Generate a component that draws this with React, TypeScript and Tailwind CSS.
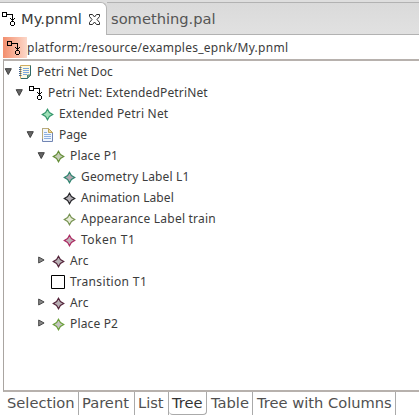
import React from "react";

type Kind = "doc" | "net" | "page" | "box" | "star";

interface Row {
  label: string;
  depth: number;
  kind: Kind;
  arrow?: "open" | "closed";
  stroke?: string;
  fill?: string;
  spacing: string;
}

const rows: Row[] = [
  { label: "Petri Net Doc", depth: 0, kind: "doc", arrow: "open", spacing: "tracking-[0.1px]" },
  { label: "Petri Net: ExtendedPetriNet", depth: 1, kind: "net", arrow: "open", spacing: "tracking-[0.15px]" },
  { label: "Extended Petri Net", depth: 2, kind: "star", stroke: "#35966c", fill: "#9fe0b8", spacing: "tracking-[0.19px]" },
  { label: "Page", depth: 2, kind: "page", arrow: "open", spacing: "tracking-[0px]" },
  { label: "Place P1", depth: 3, kind: "star", arrow: "open", stroke: "#658f38", fill: "#c5ccb6", spacing: "tracking-[0.15px]" },
  { label: "Geometry Label L1", depth: 4, kind: "star", stroke: "#2f8570", fill: "#b3a7b0", spacing: "tracking-[0.16px]" },
  { label: "Animation Label", depth: 4, kind: "star", stroke: "#252529", fill: "#b4b0b5", spacing: "tracking-[0.08px]" },
  { label: "Appearance Label train", depth: 4, kind: "star", stroke: "#779352", fill: "#e8ecd8", spacing: "tracking-[0.22px]" },
  { label: "Token T1", depth: 4, kind: "star", stroke: "#ac2a62", fill: "#c0b1b7", spacing: "tracking-[0.5px]" },
  { label: "Arc", depth: 3, kind: "star", arrow: "closed", stroke: "#54253b", fill: "#b8b0b4", spacing: "tracking-[0.2px]" },
  { label: "Transition T1", depth: 3, kind: "box", spacing: "tracking-[0.35px]" },
  { label: "Arc", depth: 3, kind: "star", arrow: "closed", stroke: "#54253b", fill: "#b8b0b4", spacing: "tracking-[0.2px]" },
  { label: "Place P2", depth: 3, kind: "star", arrow: "closed", stroke: "#6ba03a", fill: "#c4c4c1", spacing: "tracking-[0.15px]" },
];

const indents = ["pl-0", "pl-[11px]", "pl-[22px]", "pl-[33px]", "pl-[44px]"];

function NetIcon() {
  return (
    <svg width="16" height="16" viewBox="0 0 16 16" fill="#000" shapeRendering="crispEdges" className="shrink-0">
      <path d="M1 1h5v1H1zM1 5h5v1H1zM1 2h1v3H1zM5 2h1v3H5z" />
      <path d="M6 3h6v1H6zM11 4h1v6h-1zM9 7h1v1H9zM10 8h1v1h-1zM13 7h1v1h-1zM12 8h1v1h-1z" />
      <path d="M10 10h3v1h-3zM10 14h3v1h-3zM9 11h1v3H9zM13 11h1v3h-1z" />
    </svg>
  );
}

function Icon({ row }: { row: Row }) {
  if (row.kind === "net") return <NetIcon />;
  if (row.kind === "box")
    return (
      <svg width="16" height="16" viewBox="0 0 16 16" className="shrink-0">
        <path d="M1.5 1.5h13v13h-13z" fill="#fff" stroke="#000" />
      </svg>
    );
  if (row.kind === "star")
    return (
      <svg width="16" height="16" viewBox="0 0 16 16" className="shrink-0">
        <path d="M8.5 3.3L10.4 6.6l3.3 1.9-3.3 1.9-1.9 3.3-1.9-3.3L3.3 8.5l3.3-1.9z" fill={row.fill} stroke={row.stroke} strokeWidth="1.2" />
      </svg>
    );
  if (row.kind === "doc")
    return (
      <svg width="16" height="16" viewBox="0 0 16 16" className="shrink-0">
        <path d="M3.5 1.5h10v9.5l-3 3.5h-7z" fill="#fdf9e2" stroke="#d0ad60" />
        <path d="M13.5 1.5V11l-3 3.5H4" fill="none" stroke="#2f6868" />
        <path d="M10.5 14v-3h3z" fill="#8fbfa0" stroke="#4b8273" />
        <path d="M6 4.5h6M6 6.5h6M6 8.5h6M6 10.5h4" stroke="#7ca7dc" />
        <path d="M2 3.5h2.5M2 5.5h2.5M2 7.5h2.5M2 9.5h2.5M2 11.5h2.5" stroke="#47668f" />
      </svg>
    );
  return (
    <svg width="16" height="16" viewBox="0 0 16 16" className="shrink-0">
      <path d="M3.5 1.5h6l4 4v9h-10z" fill="#f1f6fd" stroke="#7185b3" />
      <path d="M3.5 12V1.5H9" fill="none" stroke="#b9ab7a" />
      <path d="M9.5 1.5v4h4z" fill="#efd99b" stroke="#bea35b" />
      <path d="M5 5.5h3M5 7.5h7M5 9.5h7M5 11.5h7" stroke="#8db0e0" />
    </svg>
  );
}

function Arrow({ state }: { state?: "open" | "closed" }) {
  return (
    <svg width="10" height="10" viewBox="0 0 10 10" className="shrink-0">
      {state === "open" && <path d="M1.2 1.7h6.1L4.25 7.5z" fill="#666" stroke="#3d3d3d" />}
      {state === "closed" && <path d="M1.7 1v6l5.4-3z" fill="#888" stroke="#484848" />}
    </svg>
  );
}

const views = [
  { name: "Selection", width: "w-[76px]", pad: "pl-[4px]" },
  { name: "Parent", width: "w-[56px]", pad: "pl-[3px]" },
  { name: "List", width: "w-[34px]", pad: "pl-[3px]" },
  { name: "Tree", width: "w-[38px]", pad: "pl-[3px]" },
  { name: "Table", width: "w-[46px]", pad: "pl-[4px]" },
  { name: "Tree with Columns", width: "w-[143px]", pad: "pl-[4px]" },
];

export default function App() {
  return (
    <div className="flex h-[420px] w-[419px] flex-col overflow-hidden bg-white text-[#3c3c3c]">
      <header className="flex h-[35px] shrink-0 bg-[#dedede] pt-[2px] font-['DejaVu_Sans',sans-serif] text-[14.67px]">
        <div className="flex w-[107px] shrink-0 items-center rounded-tr-[6px] border-r border-t border-[#b5b5b5] bg-white">
          <div className="h-[16px] w-[21px] pl-px"><NetIcon /></div>
          <span className="w-[68px] whitespace-nowrap leading-[20px]">My.pnml</span>
          <svg width="11" height="11" viewBox="0 0 11 11" className="shrink-0" fill="#fff" stroke="#2c2c2c">
            <path d="M.5.5h3l2 2.5 2-2.5h3v2L8 5.5l2.5 3v2h-3l-2-2.5-2 2.5h-3v-2l2.5-3L.5 2.5z" />
          </svg>
        </div>
        <div className="flex flex-1 items-center border-y border-[#b2b2b2] bg-gradient-to-b from-[#dadada] to-[#e1e1e1] pl-[4px] pt-px text-[#555]">something.pal</div>
      </header>
      <div className="flex h-[24px] shrink-0 items-center pl-[3px] pt-px">
        <div className="flex h-[21px] w-[24px] items-center bg-gradient-to-r from-[#f28e6d] to-[#fbd8ca] pl-[3px]"><NetIcon /></div>
        <span className="whitespace-nowrap font-['Noto_Sans',sans-serif] text-[12px] tracking-[0.26px]">platform:/resource/examples_epnk/My.pnml</span>
      </div>
      <main className="ml-[3px] flex h-[333px] shrink-0 flex-col border-y-2 border-l border-b-[#b7b1ad] border-l-[#aaa5a1] border-t-[#b7b1ad] font-['Noto_Sans',sans-serif] text-[12px]">
        {rows.map((row, i) => (
          <div key={i} className={`flex h-[21px] shrink-0 items-center ${indents[row.depth]}`}>
            <Arrow state={row.arrow} />
            <div className="ml-[3px] mr-[4px]"><Icon row={row} /></div>
            <span className={`whitespace-nowrap ${row.spacing}`}>{row.label}</span>
          </div>
        ))}
      </main>
      <nav className="ml-[3px] flex h-[23px] font-['DejaVu_Sans',sans-serif] text-[14.67px] leading-[22px] text-[#505050]">
        {views.map((view) => (
          <div key={view.name} className={`${view.width} ${view.pad} shrink-0 whitespace-nowrap border-r border-[#aaa] ${view.name === "Tree" ? "rounded-b-[4px] border-b text-[#333]" : ""}`}>{view.name}</div>
        ))}
      </nav>
    </div>
  );
}
